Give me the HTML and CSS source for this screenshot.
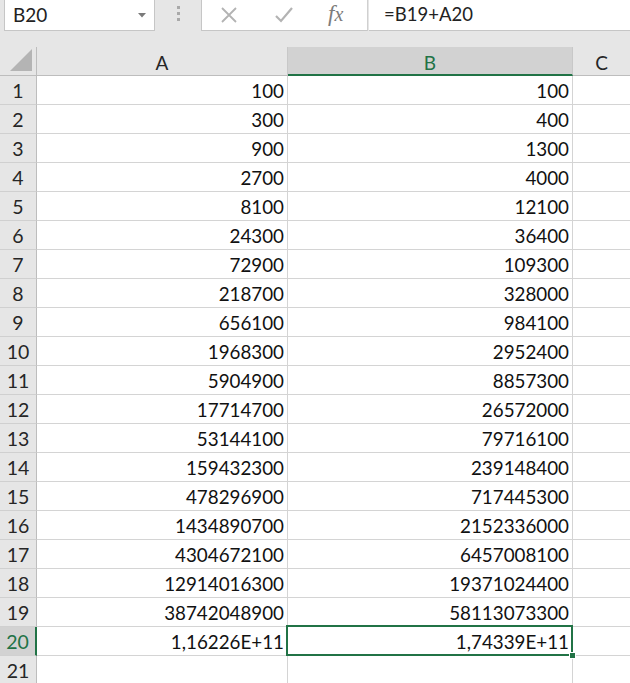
FILE: index.html
```html
<!DOCTYPE html>
<html>
<head>
<meta charset="utf-8">
<link rel="stylesheet" href="styles.css">
</head>
<body>
<div class="topbar">
  <div class="namebox">
    <span class="name">B20</span>
    <svg class="drop" width="8" height="5" viewBox="0 0 8 5"><path d="M0 0 L8 0 L4 4.5 Z" fill="#7a7a7a"/></svg>
  </div>
  <div class="grip"><i></i><i></i><i></i></div>
  <div class="fxbox">
    <svg class="ico" width="18" height="18" viewBox="0 0 18 18"><path d="M2 2 L16 16 M16 2 L2 16" stroke="#b3b3b3" stroke-width="1.8" fill="none"/></svg>
    <svg class="ico" width="20" height="18" viewBox="0 0 20 18"><path d="M2 10 L7 15 L18 2" stroke="#b3b3b3" stroke-width="2.2" fill="none"/></svg>
    <span class="fx"><i>f</i><i>x</i></span>
  </div>
  <div class="formula">=B19+A20</div>
</div>
<div class="sheet" id="sheet">
  <div class="corner"><svg width="22" height="22" viewBox="0 0 22 22"><path d="M22 0 L22 22 L0 22 Z" fill="#b4b4b4"/></svg></div>
  <div class="colh">A</div>
  <div class="colh sel">B</div>
  <div class="colh last">C</div>
</div>
<script src="app.js"></script>
</body>
</html>
```
FILE: app.js
```js
const a = ["100","300","900","2700","8100","24300","72900","218700","656100","1968300","5904900","17714700","53144100","159432300","478296900","1434890700","4304672100","12914016300","38742048900","1,16226E+11",""];
const b = ["100","400","1300","4000","12100","36400","109300","328000","984100","2952400","8857300","26572000","79716100","239148400","717445300","2152336000","6457008100","19371024400","58113073300","1,74339E+11",""];
const sheet = document.getElementById("sheet");
let html = "";
for (let i = 0; i < 21; i++) {
  const r = i + 1;
  const selRow = r === 20;
  html += `<div class="rowh${selRow ? " sel" : ""}">${r}</div>`;
  html += `<div class="cell">${a[i]}</div>`;
  html += `<div class="cell${selRow ? " active" : ""}">${b[i]}</div>`;
  html += `<div class="cell last"></div>`;
}
sheet.insertAdjacentHTML("beforeend", html);
```
FILE: styles.css
```css
html, body {
  margin: 0;
  padding: 0;
  background: #e6e6e6;
  overflow: hidden;
}
body {
  width: 630px;
  height: 683px;
  font-family: Lato, "Open Sans", sans-serif;
  color: #111;
}
.topbar {
  height: 47px;
  display: flex;
  align-items: flex-start;
}
.namebox {
  margin-left: 4px;
  width: 151px;
  height: 31px;
  box-sizing: border-box;
  background: #fff;
  border: 1px solid #c6c6c6;
  border-top: none;
  display: flex;
  align-items: center;
  justify-content: space-between;
  padding: 0 8px 2px 8px;
}
.name {
  font-size: 19px;
  color: #222;
}
.drop {
  margin-top: 3px;
}
.grip {
  width: 46px;
  display: flex;
  flex-direction: column;
  align-items: center;
  gap: 3px;
  padding-top: 6px;
}
.grip i {
  width: 3px;
  height: 3px;
  background: #a9a9a9;
  display: block;
}
.fxbox {
  width: 167px;
  height: 31px;
  box-sizing: border-box;
  background: #fff;
  border: 1px solid #c6c6c6;
  border-top: none;
  border-right: 1px solid #d0d0d0;
  display: flex;
  align-items: center;
  padding-left: 18px;
  gap: 36px;
}
.ico {
  display: block;
}
.fx {
  font-family: "Liberation Serif", serif;
  font-size: 23px;
  color: #7c7c7c;
  margin-left: -2px;
  margin-top: -2px;
}
.fx i:last-child {
  font-size: 20px;
}
.formula {
  flex: 1;
  height: 31px;
  box-sizing: border-box;
  background: #fff;
  border-bottom: 1px solid #c6c6c6;
  margin-left: 1px;
  font-size: 18.5px;
  padding-left: 15px;
  line-height: 29px;
  color: #222;
}
.sheet {
  display: grid;
  grid-template-columns: 37px 251px 285px 57px;
  grid-auto-rows: 29px;
  background: #fff;
}
.corner {
  background: #e6e6e6;
  border-right: 1px solid #bdbdbd;
  border-bottom: 1px solid #bdbdbd;
  box-sizing: border-box;
  display: flex;
  align-items: flex-end;
  justify-content: flex-end;
  padding: 0 4px 4px 0;
}
.corner svg { display: block; }
.colh {
  background: #e6e6e6;
  border-right: 1px solid #c8c8c8;
  border-bottom: 1px solid #bdbdbd;
  box-sizing: border-box;
  text-align: center;
  font-size: 19px;
  line-height: 32px;
  color: #262626;
}
.colh.sel {
  background: #d2d2d2;
  color: #217346;
  border-bottom: 2px solid #217346;
}
.colh.last {
  border-right: none;
}
.rowh {
  background: #e6e6e6;
  border-right: 1px solid #bdbdbd;
  border-bottom: 1px solid #d0d0d0;
  box-sizing: border-box;
  text-align: center;
  font-size: 19.5px;
  line-height: 29px;
  color: #262626;
}
.rowh.sel {
  background: #d2d2d2;
  color: #217346;
  border-right: 2px solid #217346;
}
.cell {
  border-right: 1px solid #d4d4d4;
  border-bottom: 1px solid #d4d4d4;
  box-sizing: border-box;
  text-align: right;
  font-size: 18.8px;
  line-height: 30px;
  padding-right: 3px;
  color: #111;
  position: relative;
}
.cell.last {
  border-right: none;
}
.cell.active::after {
  content: "";
  position: absolute;
  left: -2px;
  top: -2px;
  right: -1px;
  bottom: -1px;
  border: 2px solid #217346;
  pointer-events: none;
}
.cell.active::before {
  content: "";
  position: absolute;
  right: -4px;
  bottom: -4px;
  width: 7px;
  height: 7px;
  background: #217346;
  border: 1px solid #fff;
  box-sizing: border-box;
  z-index: 2;
}
```
